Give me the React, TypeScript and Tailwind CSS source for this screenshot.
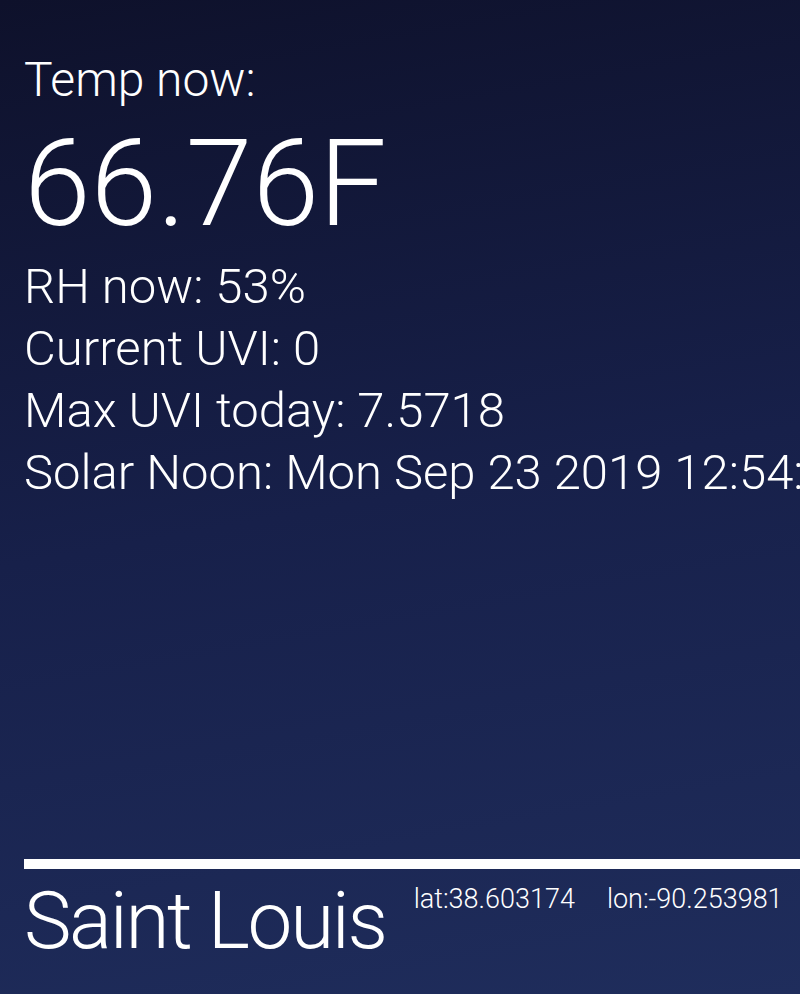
export default function App() {
  return (
    <div
      className="relative flex h-[994px] w-full flex-col overflow-hidden bg-[linear-gradient(170deg,#0e112b_0%,#17204a_50%,#1f2d5c_100%)] text-white"
      style={{ fontFamily: "Roboto, 'Liberation Sans', sans-serif" }}
    >
      {/* current readings */}
      <div className="pl-6 pt-[52px] font-light">
        <div className="text-[48px] leading-[56px]">Temp now:</div>
        <div className="mt-[11px] text-[120px] leading-[130px]">66.76F</div>
        <div className="mt-[7px] whitespace-nowrap text-[49px] leading-[62px]">
          <div>RH now: 53%</div>
          <div>Current UVI: 0</div>
          <div>Max UVI today: 7.5718</div>
          <div>Solar Noon: Mon Sep 23 2019 12:54:12 GMT-0500 (CDT)</div>
        </div>
      </div>

      {/* location */}
      <div className="mt-auto pb-[25px] pl-6">
        <div className="h-[10px] w-full bg-white" />
        <div className="mt-1 flex items-start font-light">
          <div className="text-[80px] leading-[96px] tracking-[-2.3px]">Saint Louis</div>
          <div className="ml-7 mt-[10px] flex gap-8 whitespace-nowrap text-[27px] leading-[32px]">
            <span>lat:38.603174</span>
            <span>lon:-90.253981</span>
          </div>
        </div>
      </div>
    </div>
  );
}
